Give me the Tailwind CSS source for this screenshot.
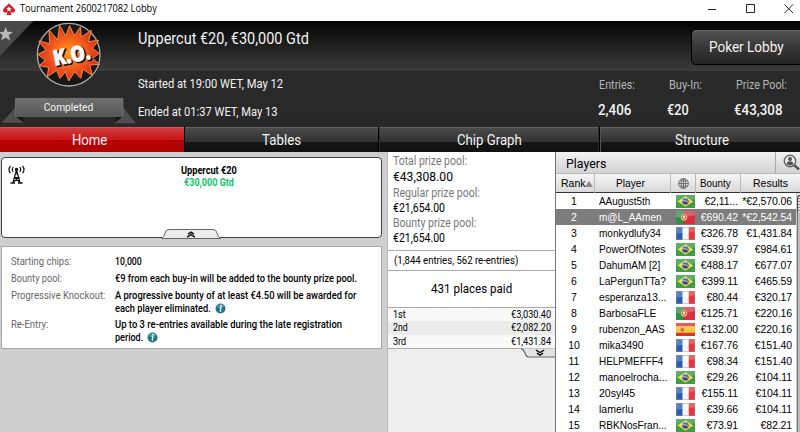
<!DOCTYPE html>
<html lang="en">
  <head>
    <meta charset="UTF-8" />
    <meta name="viewport" content="width=device-width, initial-scale=1.0" />
    <title>Tournament 2600217082 Lobby</title>
    <script src="https://cdn.jsdelivr.net/npm/@tailwindcss/browser@4"></script>
  </head>
  <body class="w-[800px] h-[432px] overflow-hidden bg-white font-['Roboto','Liberation_Sans',sans-serif] text-black">
    <!-- Shared symbols -->
    <svg class="hidden">
      <symbol id="flag-br" viewBox="0 0 19 13">
        <rect width="19" height="13" fill="#3e9c4b" />
        <path d="M9.5 1.2 17.3 6.5 9.5 11.8 1.7 6.5z" fill="#ecdc4a" />
        <circle cx="9.5" cy="6.5" r="3.2" fill="#41508f" />
        <path d="M6.6 5.7q3-.7 5.8 1.6" stroke="#c9d3e6" stroke-width=".8" fill="none" />
        <path d="M0 0h19v4q-9 3-19 2z" fill="#fff" opacity=".18" />
      </symbol>
      <symbol id="flag-pt" viewBox="0 0 19 13">
        <rect width="19" height="13" fill="#d9303f" />
        <rect width="7.5" height="13" fill="#2f8f4c" />
        <circle cx="8" cy="6.5" r="3.2" fill="#e8b75a" />
        <path d="M6.4 4.5h3.2v2.5q-1.6 2.6-3.2 0z" fill="#e9e2e0" stroke="#d3323c" stroke-width=".8" />
        <path d="M0 0h19v4q-9 3-19 2z" fill="#fff" opacity=".22" />
      </symbol>
      <symbol id="flag-fr" viewBox="0 0 19 13">
        <rect width="19" height="13" fill="#f4f4f6" />
        <rect width="6.5" height="13" fill="#2a60ae" />
        <rect x="12.7" width="6.3" height="13" fill="#e2383e" />
        <path d="M0 0h19v4q-9 3-19 2z" fill="#fff" opacity=".22" />
        <path d="M.3 .3h18.4v12.400H.3z" fill="none" stroke="#999" stroke-width=".5" />
      </symbol>
      <symbol id="flag-es" viewBox="0 0 19 13">
        <rect width="19" height="13" fill="#d8342f" />
        <rect y="3.2" width="19" height="6.6" fill="#f6c83a" />
        <rect x="4.6" y="4.6" width="3.4" height="3.8" rx="1" fill="#c46a35" />
        <path d="M0 0h19v4q-9 3-19 2z" fill="#fff" opacity=".2" />
      </symbol>
      <symbol id="info" viewBox="0 0 12 12">
        <circle cx="6" cy="6" r="5.4" fill="#1c7787" />
        <path d="M1.5 4a5 5 0 0 1 9 0q-4.500 2.200-9 0z" fill="#6fb3bd" opacity=".6" />
        <circle cx="6.700" cy="3.100" r="1" fill="#fff" />
        <path d="M5 5.200h1.500l-.8 3.400q0 .4 1 0" stroke="#fff" stroke-width="1.300" fill="none" />
      </symbol>
    </svg>

    <!-- Title bar -->
    <div class="flex h-[21px] items-center pl-[3px] pr-[6px] pb-[4px] font-['Open_Sans','Noto_Sans',sans-serif] text-[11px]">
      <svg class="mr-[5px] size-3" viewBox="0 0 12 12">
        <path d="M6 0C7 2.500 12 4.600 12 7.600c0 2-2.600 2.900-4.400 1.500L8.600 12H3.400l1-2.900C2.600 10.500 0 9.600 0 7.600 0 4.600 5 2.500 6 0z" fill="#d3202a" />
        <path d="M6 3.200l.8 1.900 2 .1-1.600 1.300.6 2L6 7.400 4.200 8.500l.6-2-1.600-1.300 2-.1z" fill="#fff" />
      </svg>
      <span data-w="137">Tournament 2600217082 Lobby</span>
      <svg class="ml-auto h-[10px] w-[86px]" viewBox="0 0 86 10" fill="none" stroke="#222">
        <path d="M0 5.500h8" />
        <path d="M38.500 .5h8v8h-8z" />
        <path d="M76.500 .5l8.500 8.500m0-8.500-8.500 8.500" />
      </svg>
    </div>

    <!-- Tournament header -->
    <header class="flex h-[106px] bg-[linear-gradient(#020202_0,#151515_15px,#3b3b3b_50px,#2a2a2a_50px,#282828_106px)] text-[#f2f2f2]">
      <svg class="h-[106px] w-[138px] shrink-0" viewBox="0 63 414 318">
        <defs>
          <radialGradient id="burst">
            <stop offset="0" stop-color="#ff9a1c" />
            <stop offset=".5" stop-color="#f5641c" />
            <stop offset="1" stop-color="#dc2a1c" />
          </radialGradient>
          <linearGradient id="ribbon" x1="0" y1="0" x2="0" y2="1">
            <stop offset="0" stop-color="#727272" />
            <stop offset="1" stop-color="#565656" />
          </linearGradient>
        </defs>
        <path d="M0 63h100L0 168z" fill="#484848" />
        <path d="M17 81l5.500 14.500 16 .5-12.500 10 4.500 15.500L17 112.500 3.500 121.500 8 106-4 96l15.500-.5z" fill="#b9b9b9" />
        <circle cx="206" cy="164" r="94" fill="#1b1716" stroke="#a9a9a9" stroke-width="4" />
        <path
          d="M147 90l26 30 6-44 18 32 12-31 14 30 18-26 3 30 30-20-9 34 31-4-19 24 21 15-21 15 22 18-30 2 8 31-28-18-7 27-18-20-18 28-10-28-16 20-10-24-28 19 4-28-28-5 18-17-23-17 25-12-22-28 33 8z"
          fill="url(#burst)" stroke="#f0913c" stroke-width="3"
        />
        <g transform="rotate(-11 215 166)" font-family="Open Sans, sans-serif" font-weight="800" font-size="64">
          <text x="162" y="191" textLength="112" lengthAdjust="spacingAndGlyphs" fill="#1a0f0c" stroke="#1a0f0c" stroke-width="5">K.O.</text>
          <text x="159" y="187" textLength="112" lengthAdjust="spacingAndGlyphs" fill="#fff" stroke="#fff" stroke-width="2">K.O.</text>
        </g>
        <path d="M46 322 5 368h65V330zM369 322l39 48h-62V330z" fill="#4e4e4e" />
        <path d="M46 349h24v18zM369 349h-23v18z" fill="#151515" />
        <path d="M46 295h323v54H46z" fill="url(#ribbon)" stroke="#787878" stroke-width="2" />
        <text x="131" y="333" textLength="149" lengthAdjust="spacingAndGlyphs" font-family="Roboto, sans-serif" font-size="34" fill="#f2f2f2">Completed</text>
      </svg>

      <div class="flex grow flex-col pt-[7px]">
        <h1 class="h-[45px] text-base leading-[21px]"><span data-w="171">Uppercut €20, €30,000 Gtd</span></h1>
        <p class="h-7 text-xs leading-6"><span data-w="145">Started at 19:00 WET, May 12</span></p>
        <p class="h-7 text-xs leading-6"><span data-w="139">Ended at 01:37 WET, May 13</span></p>
      </div>

      <div class="flex w-[210px] shrink-0 flex-col">
        <div class="mt-2 -mr-1 ml-[101px] flex h-9 shrink-0 items-center justify-center rounded-[5px] border border-black bg-linear-to-b from-[#545454] via-[#383838] to-[#242424] pr-[3px] text-[15px] shadow-[inset_0_1px_0_#6d6d6d]">
          <span data-w="75">Poker Lobby</span>
        </div>
        <dl class="mt-2 grid grid-cols-[69px_67px_1fr] grid-rows-[25px_24px] pl-[8px] leading-6">
          <dt class="pl-[1px] text-xs leading-6 text-[#b5b5b5]"><span data-w="36">Entries:</span></dt>
          <dt class="pl-[2px] text-xs leading-6 text-[#b5b5b5]"><span data-w="33">Buy-In:</span></dt>
          <dt class="pl-[2px] text-xs leading-6 text-[#b5b5b5]"><span data-w="51">Prize Pool:</span></dt>
          <dd class="text-[15px] font-medium"><span data-w="33">2,406</span></dd>
          <dd class="text-[15px] font-medium"><span data-w="22">€20</span></dd>
          <dd class="text-[15px] font-medium"><span data-w="49">€43,308</span></dd>
        </dl>
      </div>
    </header>

    <!-- Tabs -->
    <nav class="grid h-[25px] grid-cols-[184px_193px_220px_1fr] gap-x-px bg-black text-[15px] text-[#f4f4f4]">
      <a class="flex items-center justify-center border-t border-[#d0585b] bg-[linear-gradient(#cf3d40,#cc1515_50%,#b80404_50%,#b00000)] pr-1"><span data-w="35">Home</span></a>
      <a class="flex items-center justify-center border-t border-[#626262] bg-[linear-gradient(#4b4b4b,#303030_60%,#151515_60%,#111)]"><span data-w="39">Tables</span></a>
      <a class="flex items-center justify-center border-x border-t border-x-[#2d2d2d] border-t-[#626262] bg-[linear-gradient(#4b4b4b,#303030_60%,#151515_60%,#111)]"><span data-w="65">Chip Graph</span></a>
      <a class="flex items-center justify-center border-l border-t border-l-[#555] border-t-[#626262] bg-[linear-gradient(#4b4b4b,#303030_60%,#151515_60%,#111)] pl-1"><span data-w="54">Structure</span></a>
    </nav>

    <main class="grid h-[280px] grid-cols-[388px_168px_244px] overflow-hidden">
      <!-- Tournament info -->
      <section class="flex flex-col border-r border-[#b9b9b9] bg-[#d0cfd0] px-[1px] pt-[5px]">
        <div class="relative h-[81px] w-[381px] rounded-[4px] border border-[#444] bg-white pt-[7px]">
          <svg class="absolute left-[6px] top-[7px] h-[19px] w-[17px]" viewBox="0 0 17 19" fill="none" stroke="#111" stroke-width="1.200">
            <path d="M5.200 2.200q-1.800 2.300 0 4.600M2.500 .8q-3 3.700 0 7.400M11.800 2.200q1.800 2.300 0 4.600M14.500 .8q3 3.700 0 7.400" />
            <path d="M8.500 5 5 17.500M8.500 5 12 17.500M6.300 12.500h4.400L5.500 17M6.500 12.500 11.500 17M7.300 9h2.400" />
            <path d="M2.500 18h4.500m3 0h4.500" stroke-width="1.600" />
            <circle cx="8.500" cy="4.500" r="1.100" fill="#111" />
          </svg>
          <div class="flex flex-col items-center pr-[2px] pl-[36px] text-[10.500px] font-bold leading-[12px]">
            <span data-w="56">Uppercut €20</span>
            <span class="text-[#12c468]" data-w="50">€30,000 Gtd</span>
          </div>
          <svg class="absolute left-[159px] top-[71px] h-[10px] w-[60px]" viewBox="0 0 60 10">
            <path d="M.5 9.500Q3 8 4 4 4.500 .5 8 .5h44q3.500 0 4 3.500 1 4 3.500 5.500z" fill="#ececec" stroke="#666" />
            <path d="M27 5.200l3-2 3 2M26 8.200l4-2.500 4 2.500" fill="none" stroke="#111" stroke-width="1.400" />
          </svg>
        </div>

        <dl class="mt-[8px] grid h-[103px] w-[381px] grid-cols-[104px_1fr] grid-rows-[17px_17px_29px_29px] border border-[#a8a8a8] bg-white pl-[9px] pt-[9px] text-[11px] leading-[12.500px]">
          <dt class="text-[#666]"><span data-w="60">Starting chips:</span></dt>
          <dd class="font-medium"><span data-w="27">10,000</span></dd>
          <dt class="text-[#666]"><span data-w="51">Bounty pool:</span></dt>
          <dd class="font-medium"><span data-w="242">€9 from each buy-in will be added to the bounty prize pool.</span></dd>
          <dt class="text-[#666]"><span data-w="94">Progressive Knockout:</span></dt>
          <dd class="font-medium">
            <div class="h-[12.500px]"><span data-w="241">A progressive bounty of at least €4.50 will be awarded for</span></div>
            <div class="flex h-[12.500px]"><span data-w="96">each player eliminated.</span><svg class="ml-1 size-[11px]"><use href="#info" /></svg></div>
          </dd>
          <dt class="text-[#666]"><span data-w="37">Re-Entry:</span></dt>
          <dd class="font-medium">
            <div class="h-[12.500px]"><span data-w="227">Up to 3 re-entries available during the late registration</span></div>
            <div class="flex h-[12.500px]"><span data-w="28">period.</span><svg class="ml-1 size-[11px]"><use href="#info" /></svg></div>
          </dd>
        </dl>
      </section>

      <!-- Prize pool -->
      <section class="flex flex-col border-r border-[#777] bg-[#eee]">
        <dl class="h-[98px] bg-white pl-[5px] pt-[2px] text-xs leading-[15px]">
          <dt class="text-[#777]"><span data-w="74">Total prize pool:</span></dt>
          <dd class="mb-[3px] text-[13.500px] leading-[14px]"><span data-w="60">€43,308.00</span></dd>
          <dt class="text-[#777]"><span data-w="87">Regular prize pool:</span></dt>
          <dd class="mb-[2px] text-[12.500px] leading-[13px]"><span data-w="52">€21,654.00</span></dd>
          <dt class="text-[#777]"><span data-w="83">Bounty prize pool:</span></dt>
          <dd class="text-[12.500px] leading-[13px]"><span data-w="52">€21,654.00</span></dd>
        </dl>
        <p class="h-5 border-t border-[#aaa] bg-white pl-[6px] text-[10.500px] leading-[19px]"><span data-w="124">(1,844 entries, 562 re-entries)</span></p>
        <p class="flex h-[37px] items-center justify-center border-t border-[#aaa] bg-white text-[13px]"><span data-w="81">431 places paid</span></p>
        <ul class="h-[42px] border-y border-[#aaa] text-[10.500px] leading-[13.300px]">
          <li class="flex justify-between bg-[#f8f8f8] pl-[5px] pr-[4px]"><span data-w="13">1st</span><span data-w="40">€3,030.40</span></li>
          <li class="flex justify-between bg-[#ececec] pl-[5px] pr-[4px]"><span data-w="15">2nd</span><span data-w="40">€2,082.20</span></li>
          <li class="flex justify-between bg-[#f8f8f8] pl-[5px] pr-[4px]"><span data-w="13">3rd</span><span data-w="40">€1,431.84</span></li>
        </ul>
        <svg class="-mt-px ml-auto h-[10px] w-[34px]" viewBox="0 0 34 10">
          <path d="M0 .5Q3 1.500 4 5 5 9 8 9h26V.5z" fill="#e2e2e2" />
          <path d="M0 .5Q3 1.500 4 5 5 9 8 9h26" fill="none" stroke="#666" stroke-width="1.200" />
          <path d="M15 2.200l4 2.300 4-2.300M16 5.200l3 2 3-2" fill="none" stroke="#111" stroke-width="1.400" />
        </svg>
      </section>

      <!-- Players -->
      <section class="bg-white font-['Liberation_Sans',sans-serif]">
        <div class="flex h-[22px] border-b border-[#bbb] bg-linear-to-b from-[#f2f2f2] to-[#d3d3d3] font-['Roboto',sans-serif]">
          <h2 class="grow pl-[10px] pt-px text-[13px] leading-[21px]"><span data-w="40">Players</span></h2>
          <div class="w-[25px] border-l border-[#aaa] pl-[7px] pt-[2px]">
            <svg class="h-4 w-[17px]" viewBox="0 0 17 16">
              <circle cx="7" cy="7" r="5.700" fill="#eee" stroke="#666" stroke-width="1.400" />
              <path d="M11 11l5 4.500" stroke="#555" stroke-width="2.500" />
              <circle cx="7" cy="5" r="2" fill="#555" />
              <path d="M3.500 10.300q.2-3 3.500-3t3.500 3q-3.500 2.200-7 0z" fill="#555" />
            </svg>
          </div>
        </div>
        <div class="grid h-[19px] grid-cols-[39px_76px_25px_45px_59px] border-b border-[#333] bg-linear-to-b from-[#f6f6f6] to-[#d9d9d9] text-[10.500px] leading-[19px]">
          <div class="flex items-center border-r border-[#bbb] pl-[5px]"><span data-w="25">Rank</span>
            <svg class="-ml-px h-[6px] w-[8px] shrink-0" viewBox="0 0 8 6"><path d="M4 0l4 6H0z" fill="#888" /></svg>
          </div>
          <div class="border-r border-[#bbb] pr-[4px] text-center"><span data-w="29">Player</span></div>
          <div class="flex items-center justify-center border-r border-[#bbb]">
            <svg class="size-[11px]" viewBox="0 0 11 11" fill="none" stroke="#666" stroke-width=".9">
              <circle cx="5.500" cy="5.500" r="4.900" />
              <ellipse cx="5.500" cy="5.500" rx="2.300" ry="4.900" />
              <path d="M5.500 .6v9.800M.6 5.500h9.800M1.500 3h8M1.500 8h8" />
            </svg>
          </div>
          <div class="border-r border-[#bbb] pl-[4px]"><span data-w="31">Bounty</span></div>
          <div class="pl-[12px]"><span data-w="35">Results</span></div>
        </div>
        <div class="flex h-[239px]">
          <div id="players" class="w-[240px] text-[10.500px] leading-4"></div>
          <!-- Scrollbar -->
          <div class="w-[4px] overflow-visible border-l border-[#ccc] bg-[#e8e8e8]">
            <div class="mt-[2px] h-[18px] rounded-tl-[4px] border-l border-t border-[#444] bg-[repeating-linear-gradient(#ddd_0_2px,#888_2px_3px)]"></div>
            <div class="h-[219px] border-l border-[#777] bg-[#bdbdbd]"></div>
          </div>
        </div>
      </section>
    </main>

    <script>
      // rank is the position in the list
      const players = [
        ['AAugust5th', 51, 'br', '€2,11...', '*€2,570.06'],
        ['m@L_AAmen', 63, 'pt', '€690.42', '*€2,542.54'],
        ['monkydlufy34', 62, 'fr', '€326.78', '€1,431.84'],
        ['PowerOfNotes', 66, 'br', '€539.97', '€984.61'],
        ['DahumAM [2]', 61, 'br', '€488.17', '€677.07'],
        ['LaPergunTTa?', 67, 'br', '€399.11', '€465.59'],
        ['esperanza13...', 67, 'fr', '€80.44', '€320.17'],
        ['BarbosaFLE', 57, 'pt', '€125.71', '€220.16'],
        ['rubenzon_AAS', 66, 'es', '€132.00', '€220.16'],
        ['mika3490', 45, 'fr', '€167.76', '€151.40'],
        ['HELPMEFFF4', 64, 'fr', '€98.34', '€151.40'],
        ['manoelrocha...', 68, 'br', '€29.26', '€104.11'],
        ['20syl45', 36, 'fr', '€155.11', '€104.11'],
        ['lamerlu', 34, 'fr', '€39.66', '€104.11'],
        ['RBKNosFran...', 68, 'br', '€73.91', '€82.21'],
      ];

      document.getElementById('players').innerHTML = players
        .map(
          ([name, width, flag, bounty, result], i) => `
            <div class="grid h-4 grid-cols-[43px_77px_18px_44px_54px] ${i === 1 ? 'bg-[#7d7d7d] text-white' : ''}">
              <div class="pr-[7px] text-center">${i + 1}</div>
              <div><span data-w="${width}">${name}</span></div>
              <svg class="mt-[2px] h-[13px] w-[19px]"><use href="#flag-${flag}" /></svg>
              <div class="pl-[6px] text-right tracking-[-0.1px] whitespace-nowrap">${bounty}</div>
              <div class="text-right tracking-[-0.1px] whitespace-nowrap">${result}</div>
            </div>`
        )
        .join('');

      // Condense each label to its own width, again whenever its natural size changes
      const fit = (el) => {
        const natural = el.offsetWidth;
        if (!natural) return;
        el.style.transform = `scaleX(${el.dataset.w / natural})`;
        el.style.marginRight = `${el.dataset.w - natural}px`;
      };
      const observer = new ResizeObserver((entries) => entries.forEach((e) => fit(e.target)));

      document.querySelectorAll('[data-w]').forEach((el) => {
        el.classList.add('inline-block', 'shrink-0', 'origin-left', 'whitespace-nowrap');
        fit(el);
        observer.observe(el);
      });
      window.addEventListener('load', () => document.querySelectorAll('[data-w]').forEach(fit));
    </script>
  </body>
</html>
